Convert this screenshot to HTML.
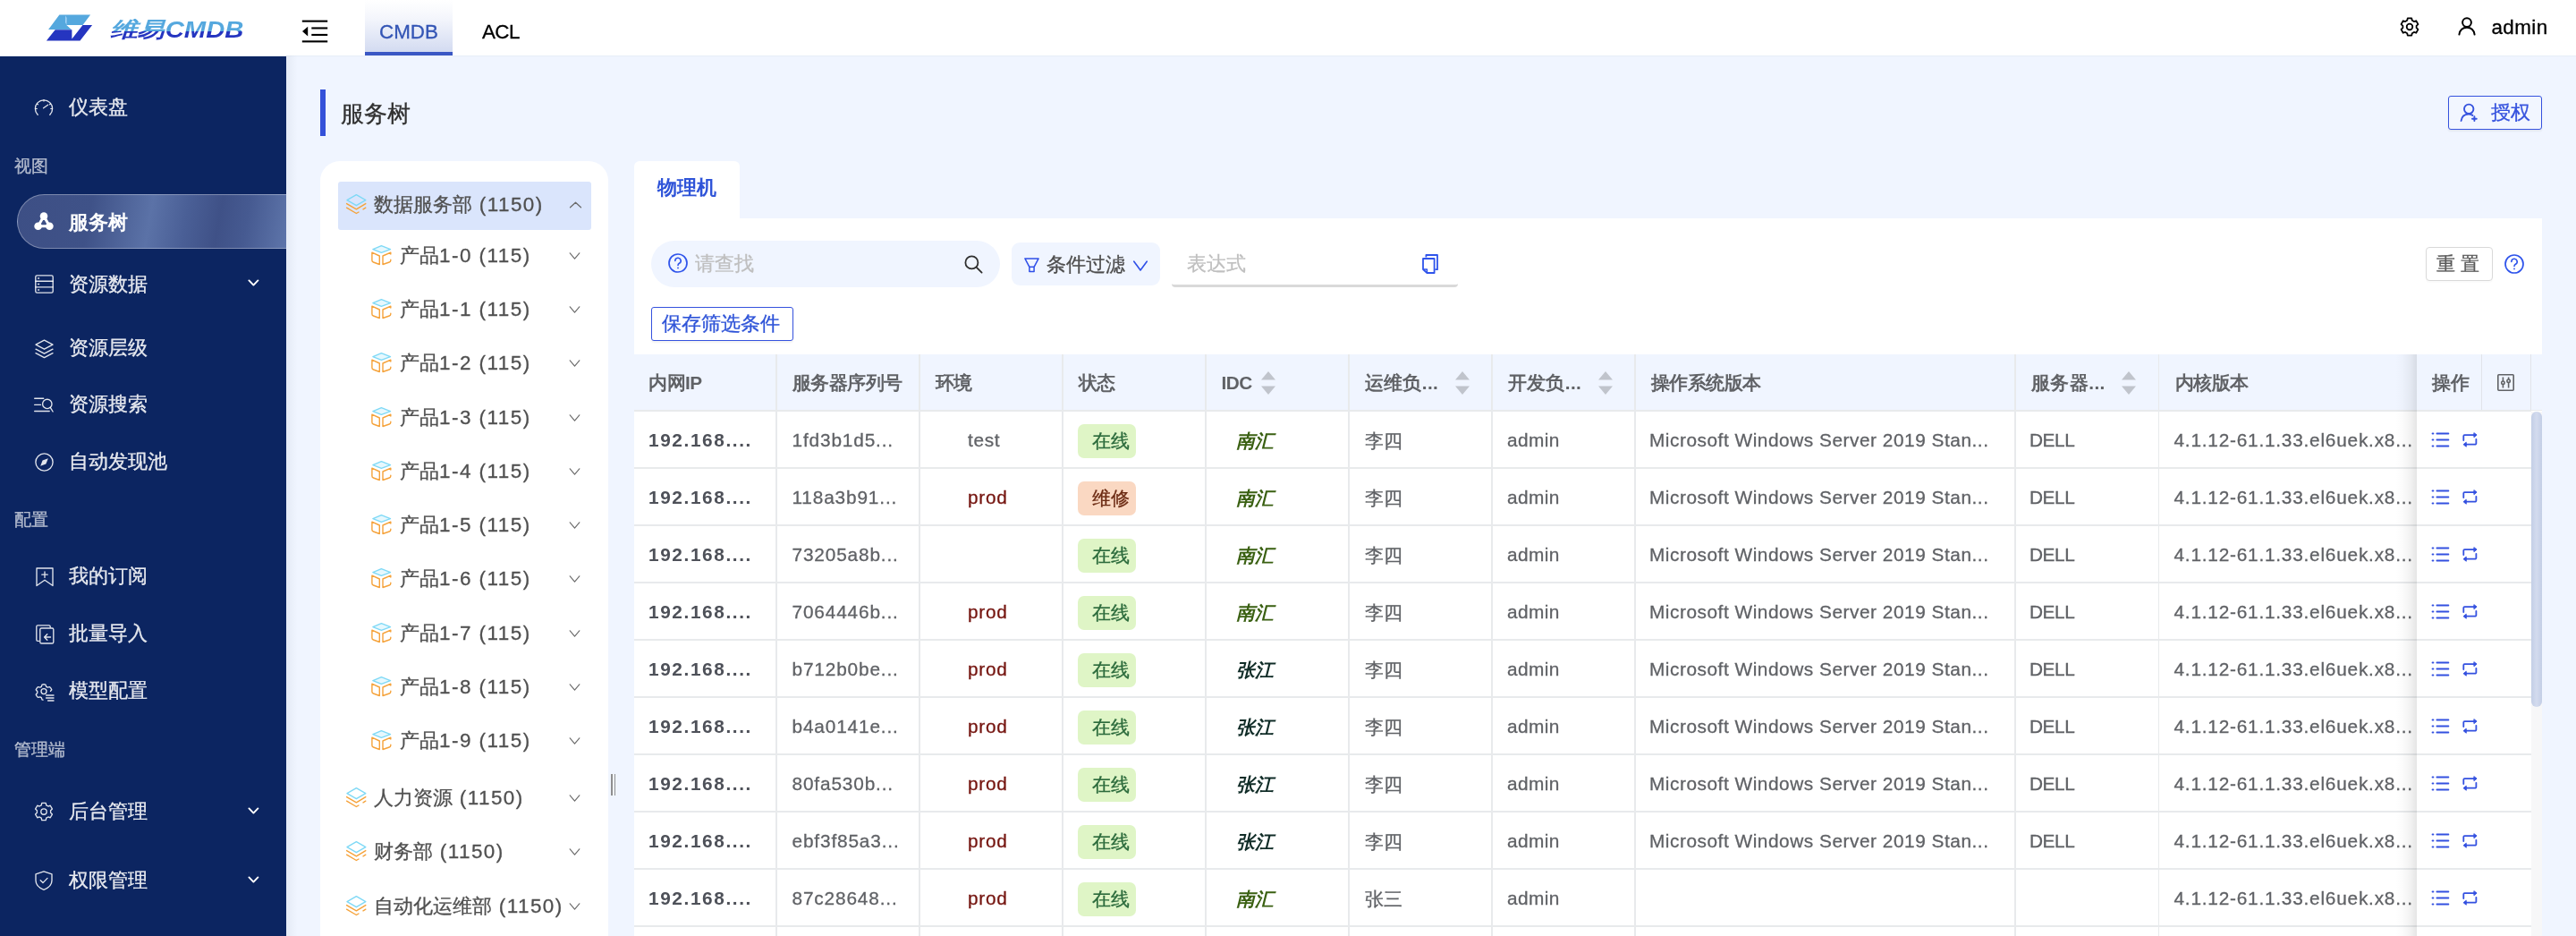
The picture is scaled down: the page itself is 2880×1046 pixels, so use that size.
<!DOCTYPE html>
<html lang="zh"><head><meta charset="utf-8"><title>CMDB</title>
<style>
*{box-sizing:border-box;margin:0;padding:0}
html,body{width:2880px;height:1046px;overflow:hidden}
body{position:relative;background:#f0f5ff;font-family:"Liberation Sans",sans-serif;color:#595959;font-size:22.4px}
#w{position:absolute;left:0;top:0;width:2880px;height:1046px;overflow:hidden;will-change:transform;-webkit-text-stroke:.3px}
.abs{position:absolute}
.t{position:absolute;white-space:nowrap;line-height:1}
svg{position:absolute;overflow:visible}
#hdr{position:absolute;left:0;top:0;width:2880px;height:62px;background:#fff;box-shadow:0 1px 1px rgba(0,21,41,.03)}
#side{position:absolute;left:0;top:63px;width:320px;height:983px;background:#0c2561}
.mi{position:absolute;left:77px;font-size:22.4px;color:rgba(255,255,255,.88);white-space:nowrap;line-height:30px;height:30px}
.gl{position:absolute;left:16px;font-size:19.2px;color:rgba(255,255,255,.62);white-space:nowrap;line-height:26px;height:26px}
.tr{position:absolute;font-size:22.4px;color:#505050;white-space:nowrap;line-height:30px;height:30px}
.tr i{font-style:normal;letter-spacing:1.5px}
.th{position:absolute;letter-spacing:-.5px;font-size:20.8px;font-weight:bold;color:#606266;white-space:nowrap;line-height:28px;height:28px;top:414px}
.td{position:absolute;font-size:20.8px;color:#606266;white-space:nowrap;line-height:28px;height:28px}
.ip{letter-spacing:1.6px}.sn{letter-spacing:.85px}.env{letter-spacing:.7px}.adm{letter-spacing:.4px}.os{letter-spacing:.54px}.dell{letter-spacing:-.4px}.ker{letter-spacing:.78px}
.cj{margin-top:1.5px}
.th,.ip,.idc,#logot,#logot2,#tab,.b{-webkit-text-stroke:0}
.vl{position:absolute;width:1.6px;background:#e8eaec}
.hl{position:absolute;height:1.6px;background:#e8eaec;left:709px;width:2121px}
.tag{position:absolute;width:65px;height:37.5px;border-radius:7px;font-size:20.8px;line-height:37.5px;padding-left:16px;white-space:nowrap}
</style></head>
<body>
<div id="w">
<div id="hdr"></div>
<svg style="left:0;top:0" width="320" height="62" viewBox="0 0 320 62">
<polygon points="66.4,16.6 101.1,16.6 92.5,28 74.3,28 79.9,33 54.1,33" fill="#55a8de"/>
<polygon points="73.2,17.2 74.6,20 74.5,28 73,25" fill="#a6d4f6"/>
<polygon points="61.7,33.2 80.4,33.2 80.4,43.4 92.5,28 103.1,28 89.5,45.6 51.9,45.6" fill="#2535c0"/>
</svg>
<div class="t" id="logot" style="left:117.8px;top:20.5px;font-size:23.5px;background:linear-gradient(#55a8de 0,#55a8de 58%,#2535c0 58%,#2535c0 100%);-webkit-background-clip:text;background-clip:text;color:transparent;font-weight:bold;font-style:italic;transform-origin:0 0;transform:scaleX(1.31);line-height:24px;height:24px;padding:0 4px">维易</div>
<div class="t" id="logot2" style="left:179.8px;top:20.5px;font-size:25px;background:linear-gradient(#55a8de 0,#55a8de 58%,#2535c0 58%,#2535c0 100%);-webkit-background-clip:text;background-clip:text;color:transparent;font-weight:bold;font-style:italic;transform-origin:0 0;transform:scaleX(1.17);line-height:24px;height:24px;padding:0 4px">CMDB</div>
<svg style="left:337px;top:22px" width="30" height="26" viewBox="0 0 30 26">
<rect x=".8" y=".6" width="28.4" height="2.1" fill="#000"/>
<rect x="11.3" y="8.4" width="17.9" height="2.1" fill="#000"/>
<rect x="11.3" y="15.9" width="17.9" height="2.1" fill="#000"/>
<rect x=".8" y="23.3" width="28.4" height="2.1" fill="#000"/>
<polygon points="1,13.1 7.2,7.8 7.2,18.4" fill="#000"/>
</svg>
<div class="abs" style="left:408px;top:0;width:98px;height:62px;background:linear-gradient(#ffffff 0%,#f4f6fc 35%,#d3dbf1 100%);border-bottom:4px solid #3a57c4"></div>
<div class="t" id="cmdb" style="left:424px;top:25px;font-size:22.4px;color:#3355b5;line-height:22px">CMDB</div>
<div class="t" id="acl" style="left:539px;top:25px;font-size:22.4px;color:#000;line-height:22px;letter-spacing:-.6px">ACL</div>
<svg style="left:2683.2px;top:19px" width="22" height="22" viewBox="0 0 22 22" fill="none" stroke="#000" stroke-width="1.8" stroke-linejoin="round">
<path d="M13.76 3.81L13.23 1.35L8.77 1.35L8.24 3.81L6.15 5.02L3.76 4.25L1.53 8.11L3.39 9.8L3.39 12.2L1.53 13.89L3.76 17.75L6.15 16.98L8.24 18.19L8.77 20.65L13.23 20.65L13.76 18.19L15.85 16.98L18.24 17.75L20.47 13.89L18.61 12.2L18.61 9.8L20.47 8.11L18.24 4.25L15.85 5.02z"/>
<circle cx="11" cy="11" r="3.3"/>
</svg>
<svg style="left:2748px;top:19px" width="20" height="21" viewBox="0 0 20 21" fill="none" stroke="#000" stroke-width="2" stroke-linecap="round">
<circle cx="10" cy="6.1" r="4.9"/>
<path d="M1.4 19.6c.8-4.8 4.2-7.8 8.6-7.8s7.8 3 8.6 7.8"/>
</svg>
<div class="t" id="admin" style="left:2785.5px;top:19px;font-size:22.4px;color:#000;line-height:24px;letter-spacing:.4px">admin</div>
<div class="abs" style="left:320px;top:62px;width:12px;height:984px;background:linear-gradient(90deg,rgba(30,40,60,.05),rgba(30,40,60,0))"></div>
<div id="side"></div>
<div class="abs" style="left:19px;top:217px;width:300.5px;height:61px;border-radius:30.5px 0 0 30.5px;border:1.6px solid rgba(255,255,255,.32);border-right:none;background:linear-gradient(100deg,#3d4f85 0%,#3f5288 27%,#5b72a7 49%,#4a5f96 62%,#3f5187 74%,#465a91 84%,#5e75aa 100%)"></div>
<div class="mi" style="top:105px;">仪表盘</div>
<div class="mi" style="top:233.6px;font-weight:bold;color:#fff;-webkit-text-stroke:0;">服务树</div>
<div class="mi" style="top:302.5px;">资源数据</div>
<svg style="left:277px;top:312px" width="13" height="9" viewBox="0 0 13 9" fill="none" stroke="#fff" stroke-width="1.9" stroke-linecap="round" stroke-linejoin="round"><path d="M1.4 1.4l5 5.2 5-5.2"/></svg>
<div class="mi" style="top:374px;">资源层级</div>
<div class="mi" style="top:437px;">资源搜索</div>
<div class="mi" style="top:501px;">自动发现池</div>
<div class="mi" style="top:629px;">我的订阅</div>
<div class="mi" style="top:693px;">批量导入</div>
<div class="mi" style="top:757px;">模型配置</div>
<div class="mi" style="top:892px;">后台管理</div>
<svg style="left:277px;top:901.5px" width="13" height="9" viewBox="0 0 13 9" fill="none" stroke="#fff" stroke-width="1.9" stroke-linecap="round" stroke-linejoin="round"><path d="M1.4 1.4l5 5.2 5-5.2"/></svg>
<div class="mi" style="top:969px;">权限管理</div>
<svg style="left:277px;top:978.5px" width="13" height="9" viewBox="0 0 13 9" fill="none" stroke="#fff" stroke-width="1.9" stroke-linecap="round" stroke-linejoin="round"><path d="M1.4 1.4l5 5.2 5-5.2"/></svg>
<div class="gl" style="top:172.6px">视图</div>
<div class="gl" style="top:568px">配置</div>
<div class="gl" style="top:824.5px">管理端</div>
<svg style="left:38px;top:109px" width="22" height="22" viewBox="0 0 22 22" fill="none" stroke="rgba(255,255,255,.88)" stroke-width="1.35" stroke-linecap="round" stroke-linejoin="round" ><path d="M4.2 19.2A9.6 9.6 0 1 1 17.8 19.2"/><path d="M10.6 11.8l5-3.6"/><path d="M11 2.5v1.6M3.2 7l1.3.8M18.8 7l-1.3.8M1.8 12.5h1.5M20.2 12.5h-1.5" stroke-width="1.2"/></svg>
<svg style="left:38px;top:237px" width="22" height="21" viewBox="0 0 22 21" fill="#fff" stroke="#fff">
<circle cx="11" cy="4.6" r="4.3" stroke="none"/><circle cx="4.6" cy="15.8" r="4.3" stroke="none"/><circle cx="17.4" cy="15.8" r="4.3" stroke="none"/>
<path d="M11 4.6L4.6 15.8h12.8z" fill="none" stroke-width="3"/></svg>
<svg style="left:38.5px;top:307px" width="21" height="21" viewBox="0 0 21 21" fill="none" stroke="rgba(255,255,255,.88)" stroke-width="1.35" stroke-linecap="round" stroke-linejoin="round" ><rect x="0.8" y="0.8" width="19.4" height="19.4" rx="1.6"/><path d="M0.8 7.2h19.4M0.8 13.8h19.4"/><path d="M3.6 4h1M3.6 10.5h1M3.6 17h1" stroke-width="1.3"/></svg>
<svg style="left:38.5px;top:379px" width="21" height="22" viewBox="0 0 21 22" fill="none" stroke="rgba(255,255,255,.88)" stroke-width="1.35" stroke-linecap="round" stroke-linejoin="round" ><path d="M10.5 1.2l9.5 5-9.5 5-9.5-5z"/><path d="M1 11.2l9.5 5 9.5-5"/><path d="M1 15.6l9.5 5 9.5-5"/></svg>
<svg style="left:38px;top:443.5px" width="22" height="20" viewBox="0 0 22 20" fill="none" stroke="rgba(255,255,255,.88)" stroke-width="1.35" stroke-linecap="round" stroke-linejoin="round" ><path d="M.7 1.2h10M.7 8.4h6.8M.7 15.5h16.5"/><circle cx="14.8" cy="7.4" r="5.2"/><path d="M18.3 11.4l2.8 4.6"/></svg>
<svg style="left:38.5px;top:505.5px" width="21" height="21" viewBox="0 0 21 21" fill="none" stroke="rgba(255,255,255,.88)" stroke-width="1.35" stroke-linecap="round" stroke-linejoin="round" ><circle cx="10.5" cy="10.5" r="9.6"/><path d="M14.8 6.2l-2.4 6.2-6.2 2.4 2.4-6.2z" fill="rgba(255,255,255,.88)" stroke="none"/></svg>
<svg style="left:40px;top:633.5px" width="20" height="22" viewBox="0 0 20 22" fill="none" stroke="rgba(255,255,255,.88)" stroke-width="1.35" stroke-linecap="round" stroke-linejoin="round" ><path d="M1 1h18v19.5l-9-6.2-9 6.2z"/><path d="M10 5v6.4M6.8 8.2h6.4" stroke-width="1.3"/></svg>
<svg style="left:40px;top:697.5px" width="21" height="22" viewBox="0 0 21 22" fill="none" stroke="rgba(255,255,255,.88)" stroke-width="1.35" stroke-linecap="round" stroke-linejoin="round" ><path d="M3.4 18.4h-1.2a1.4 1.4 0 0 1-1.4-1.4V2.2A1.4 1.4 0 0 1 2.2 .8h12.6a1.4 1.4 0 0 1 1.4 1.4v.8"/><rect x="4.8" y="4" width="15" height="17" rx="1.6"/><path d="M16.5 14h-6.5M12.8 10.8L9.6 14l3.2 3.2" stroke-width="1.4"/></svg>
<svg style="left:39px;top:761.5px" width="22" height="22" viewBox="0 0 22 22" fill="none" stroke="rgba(255,255,255,.88)" stroke-width="1.35" stroke-linecap="round" stroke-linejoin="round" ><path d="M9 20.2l-.9-.3-.8-2.2-1.5-.8-2.4.5-1.3-1.5-.9-1.7 1.6-1.9v-1.6L1.2 8.8l.9-1.7 1.3-1.5 2.4.5 1.5-.8.8-2.2 1.9-.5 1.9.5.8 2.2 1.5.8 2.4-.5 1.3 1.5.9 1.7-1.3 1.6"/><circle cx="10" cy="10.6" r="3"/><path d="M12.6 15h8.4M12.6 18h8.4M14.6 21h6.4" stroke-width="1.4"/></svg>
<svg style="left:38px;top:896px" width="22" height="22" viewBox="0 0 22 22" fill="none" stroke="rgba(255,255,255,.88)" stroke-width="1.35" stroke-linecap="round" stroke-linejoin="round" ><path d="M13.76 3.81L13.23 1.35L8.77 1.35L8.24 3.81L6.15 5.02L3.76 4.25L1.53 8.11L3.39 9.8L3.39 12.2L1.53 13.89L3.76 17.75L6.15 16.98L8.24 18.19L8.77 20.65L13.23 20.65L13.76 18.19L15.85 16.98L18.24 17.75L20.47 13.89L18.61 12.2L18.61 9.8L20.47 8.11L18.24 4.25L15.85 5.02z"/><circle cx="11" cy="11" r="3.2"/></svg>
<svg style="left:39px;top:973px" width="20" height="22" viewBox="0 0 20 22" fill="none" stroke="rgba(255,255,255,.88)" stroke-width="1.35" stroke-linecap="round" stroke-linejoin="round" ><path d="M10 .9l9 3v7.2c0 4.8-3.6 8.2-9 10.2C4.6 19.3 1 15.9 1 11.1V3.9z"/><path d="M6.2 10.8l2.8 2.8 5-5.2"/></svg>
<div class="abs" style="left:358px;top:100px;width:6px;height:52px;background:#3451d9"></div>
<div class="t" id="ptitle" style="left:381px;top:111px;font-size:25.6px;color:#303030;line-height:32px">服务树</div>
<div class="abs" style="left:2737px;top:107px;width:105px;height:38px;border:1.6px solid #3552de;border-radius:3px;background:#f2f6ff;box-shadow:0 2px 2px rgba(0,0,0,.06)"></div>
<svg style="left:2750px;top:115px" width="22" height="22" viewBox="0 0 22 22" fill="none" stroke="#3552de" stroke-width="1.9" stroke-linecap="round">
<circle cx="10.2" cy="6.8" r="5.2"/><path d="M1.6 20c.6-4.6 3.8-7.4 8.2-7.4 1.8 0 3.4.5 4.6 1.3"/><path d="M16.4 15.3v4.8M14 17.7h4.8" stroke-width="1.9"/></svg>
<div class="t" id="grant" style="left:2785px;top:111px;font-size:22.4px;color:#3552de;line-height:30px">授权</div>
<div class="abs" style="left:358px;top:180px;width:322px;height:900px;background:#fff;border-radius:22px"></div>
<div class="abs" style="left:378px;top:203px;width:283px;height:53.75px;background:#dae5fc;border-radius:3px"></div>
<svg style="left:387px;top:217px" width="22" height="22" viewBox="0 0 22 22" fill="none" stroke="#f5a23a" stroke-width="1.4" stroke-linecap="round" stroke-linejoin="round" ><path d="M1 6.6L11.4 .6l10.4 6L11.4 12.7z" stroke="#7fd9f6"/><path d="M.6 10.6l10.8 6.3 10.4-6.3" stroke="#f5a23a"/><path d="M.6 15.2l10.8 6.3 2.6-1.5M19 16.8l2.8-1.6" stroke="#f5a23a"/></svg>
<div class="tr" id="tr0" style="left:418px;top:214px">数据服务部<i> (1150)</i></div>
<svg style="left:636.7px;top:225.2px" width="13" height="8" viewBox="0 0 13 8" fill="none" stroke="#6b6b6b" stroke-width="1.25" stroke-linecap="round" stroke-linejoin="round"><path d="M.5 6.8l6-5.6 6 5.6"/></svg>
<svg style="left:415.3px;top:273.9px" width="22" height="22" viewBox="0 0 22 22" fill="none" stroke="#f5a23a" stroke-width="1.4" stroke-linecap="round" stroke-linejoin="round" ><path d="M1.9 4.6L11.4 .6l10.1 4-10.1 3.8z" stroke="#7fd9f6" fill="#e6f8fe"/><path d="M.9 8.1L9.3 12v9.5l-6.9-2.5a2 2 0 0 1-1.5-1.9z" stroke="#f5a23a"/><path d="M21.8 10V8.1L13 12v9.5l7.3-2.5a2 2 0 0 0 1.5-1.9v-.9" stroke="#f5a23a"/></svg>
<div class="tr" id="tr1" style="left:447px;top:270.5px">产品<i>1-0 (115)</i></div>
<svg style="left:636.3px;top:281.7px" width="13" height="8" viewBox="0 0 13 8" fill="none" stroke="#6b6b6b" stroke-width="1.15" stroke-linecap="round" stroke-linejoin="round"><path d="M1.2 .8l5.3 6.4L11.8 .8"/></svg>
<svg style="left:415.3px;top:334.4px" width="22" height="22" viewBox="0 0 22 22" fill="none" stroke="#f5a23a" stroke-width="1.4" stroke-linecap="round" stroke-linejoin="round" ><path d="M1.9 4.6L11.4 .6l10.1 4-10.1 3.8z" stroke="#7fd9f6" fill="#e6f8fe"/><path d="M.9 8.1L9.3 12v9.5l-6.9-2.5a2 2 0 0 1-1.5-1.9z" stroke="#f5a23a"/><path d="M21.8 10V8.1L13 12v9.5l7.3-2.5a2 2 0 0 0 1.5-1.9v-.9" stroke="#f5a23a"/></svg>
<div class="tr" id="tr2" style="left:447px;top:331px">产品<i>1-1 (115)</i></div>
<svg style="left:636.3px;top:342.2px" width="13" height="8" viewBox="0 0 13 8" fill="none" stroke="#6b6b6b" stroke-width="1.15" stroke-linecap="round" stroke-linejoin="round"><path d="M1.2 .8l5.3 6.4L11.8 .8"/></svg>
<svg style="left:415.3px;top:394.4px" width="22" height="22" viewBox="0 0 22 22" fill="none" stroke="#f5a23a" stroke-width="1.4" stroke-linecap="round" stroke-linejoin="round" ><path d="M1.9 4.6L11.4 .6l10.1 4-10.1 3.8z" stroke="#7fd9f6" fill="#e6f8fe"/><path d="M.9 8.1L9.3 12v9.5l-6.9-2.5a2 2 0 0 1-1.5-1.9z" stroke="#f5a23a"/><path d="M21.8 10V8.1L13 12v9.5l7.3-2.5a2 2 0 0 0 1.5-1.9v-.9" stroke="#f5a23a"/></svg>
<div class="tr" id="tr3" style="left:447px;top:391px">产品<i>1-2 (115)</i></div>
<svg style="left:636.3px;top:402.2px" width="13" height="8" viewBox="0 0 13 8" fill="none" stroke="#6b6b6b" stroke-width="1.15" stroke-linecap="round" stroke-linejoin="round"><path d="M1.2 .8l5.3 6.4L11.8 .8"/></svg>
<svg style="left:415.3px;top:454.9px" width="22" height="22" viewBox="0 0 22 22" fill="none" stroke="#f5a23a" stroke-width="1.4" stroke-linecap="round" stroke-linejoin="round" ><path d="M1.9 4.6L11.4 .6l10.1 4-10.1 3.8z" stroke="#7fd9f6" fill="#e6f8fe"/><path d="M.9 8.1L9.3 12v9.5l-6.9-2.5a2 2 0 0 1-1.5-1.9z" stroke="#f5a23a"/><path d="M21.8 10V8.1L13 12v9.5l7.3-2.5a2 2 0 0 0 1.5-1.9v-.9" stroke="#f5a23a"/></svg>
<div class="tr" id="tr4" style="left:447px;top:451.5px">产品<i>1-3 (115)</i></div>
<svg style="left:636.3px;top:462.7px" width="13" height="8" viewBox="0 0 13 8" fill="none" stroke="#6b6b6b" stroke-width="1.15" stroke-linecap="round" stroke-linejoin="round"><path d="M1.2 .8l5.3 6.4L11.8 .8"/></svg>
<svg style="left:415.3px;top:514.9px" width="22" height="22" viewBox="0 0 22 22" fill="none" stroke="#f5a23a" stroke-width="1.4" stroke-linecap="round" stroke-linejoin="round" ><path d="M1.9 4.6L11.4 .6l10.1 4-10.1 3.8z" stroke="#7fd9f6" fill="#e6f8fe"/><path d="M.9 8.1L9.3 12v9.5l-6.9-2.5a2 2 0 0 1-1.5-1.9z" stroke="#f5a23a"/><path d="M21.8 10V8.1L13 12v9.5l7.3-2.5a2 2 0 0 0 1.5-1.9v-.9" stroke="#f5a23a"/></svg>
<div class="tr" id="tr5" style="left:447px;top:511.5px">产品<i>1-4 (115)</i></div>
<svg style="left:636.3px;top:522.7px" width="13" height="8" viewBox="0 0 13 8" fill="none" stroke="#6b6b6b" stroke-width="1.15" stroke-linecap="round" stroke-linejoin="round"><path d="M1.2 .8l5.3 6.4L11.8 .8"/></svg>
<svg style="left:415.3px;top:575.4px" width="22" height="22" viewBox="0 0 22 22" fill="none" stroke="#f5a23a" stroke-width="1.4" stroke-linecap="round" stroke-linejoin="round" ><path d="M1.9 4.6L11.4 .6l10.1 4-10.1 3.8z" stroke="#7fd9f6" fill="#e6f8fe"/><path d="M.9 8.1L9.3 12v9.5l-6.9-2.5a2 2 0 0 1-1.5-1.9z" stroke="#f5a23a"/><path d="M21.8 10V8.1L13 12v9.5l7.3-2.5a2 2 0 0 0 1.5-1.9v-.9" stroke="#f5a23a"/></svg>
<div class="tr" id="tr6" style="left:447px;top:572px">产品<i>1-5 (115)</i></div>
<svg style="left:636.3px;top:583.2px" width="13" height="8" viewBox="0 0 13 8" fill="none" stroke="#6b6b6b" stroke-width="1.15" stroke-linecap="round" stroke-linejoin="round"><path d="M1.2 .8l5.3 6.4L11.8 .8"/></svg>
<svg style="left:415.3px;top:635.4px" width="22" height="22" viewBox="0 0 22 22" fill="none" stroke="#f5a23a" stroke-width="1.4" stroke-linecap="round" stroke-linejoin="round" ><path d="M1.9 4.6L11.4 .6l10.1 4-10.1 3.8z" stroke="#7fd9f6" fill="#e6f8fe"/><path d="M.9 8.1L9.3 12v9.5l-6.9-2.5a2 2 0 0 1-1.5-1.9z" stroke="#f5a23a"/><path d="M21.8 10V8.1L13 12v9.5l7.3-2.5a2 2 0 0 0 1.5-1.9v-.9" stroke="#f5a23a"/></svg>
<div class="tr" id="tr7" style="left:447px;top:632px">产品<i>1-6 (115)</i></div>
<svg style="left:636.3px;top:643.2px" width="13" height="8" viewBox="0 0 13 8" fill="none" stroke="#6b6b6b" stroke-width="1.15" stroke-linecap="round" stroke-linejoin="round"><path d="M1.2 .8l5.3 6.4L11.8 .8"/></svg>
<svg style="left:415.3px;top:695.9px" width="22" height="22" viewBox="0 0 22 22" fill="none" stroke="#f5a23a" stroke-width="1.4" stroke-linecap="round" stroke-linejoin="round" ><path d="M1.9 4.6L11.4 .6l10.1 4-10.1 3.8z" stroke="#7fd9f6" fill="#e6f8fe"/><path d="M.9 8.1L9.3 12v9.5l-6.9-2.5a2 2 0 0 1-1.5-1.9z" stroke="#f5a23a"/><path d="M21.8 10V8.1L13 12v9.5l7.3-2.5a2 2 0 0 0 1.5-1.9v-.9" stroke="#f5a23a"/></svg>
<div class="tr" id="tr8" style="left:447px;top:692.5px">产品<i>1-7 (115)</i></div>
<svg style="left:636.3px;top:703.7px" width="13" height="8" viewBox="0 0 13 8" fill="none" stroke="#6b6b6b" stroke-width="1.15" stroke-linecap="round" stroke-linejoin="round"><path d="M1.2 .8l5.3 6.4L11.8 .8"/></svg>
<svg style="left:415.3px;top:755.9px" width="22" height="22" viewBox="0 0 22 22" fill="none" stroke="#f5a23a" stroke-width="1.4" stroke-linecap="round" stroke-linejoin="round" ><path d="M1.9 4.6L11.4 .6l10.1 4-10.1 3.8z" stroke="#7fd9f6" fill="#e6f8fe"/><path d="M.9 8.1L9.3 12v9.5l-6.9-2.5a2 2 0 0 1-1.5-1.9z" stroke="#f5a23a"/><path d="M21.8 10V8.1L13 12v9.5l7.3-2.5a2 2 0 0 0 1.5-1.9v-.9" stroke="#f5a23a"/></svg>
<div class="tr" id="tr9" style="left:447px;top:752.5px">产品<i>1-8 (115)</i></div>
<svg style="left:636.3px;top:763.7px" width="13" height="8" viewBox="0 0 13 8" fill="none" stroke="#6b6b6b" stroke-width="1.15" stroke-linecap="round" stroke-linejoin="round"><path d="M1.2 .8l5.3 6.4L11.8 .8"/></svg>
<svg style="left:415.3px;top:816.4px" width="22" height="22" viewBox="0 0 22 22" fill="none" stroke="#f5a23a" stroke-width="1.4" stroke-linecap="round" stroke-linejoin="round" ><path d="M1.9 4.6L11.4 .6l10.1 4-10.1 3.8z" stroke="#7fd9f6" fill="#e6f8fe"/><path d="M.9 8.1L9.3 12v9.5l-6.9-2.5a2 2 0 0 1-1.5-1.9z" stroke="#f5a23a"/><path d="M21.8 10V8.1L13 12v9.5l7.3-2.5a2 2 0 0 0 1.5-1.9v-.9" stroke="#f5a23a"/></svg>
<div class="tr" id="tr10" style="left:447px;top:813px">产品<i>1-9 (115)</i></div>
<svg style="left:636.3px;top:824.2px" width="13" height="8" viewBox="0 0 13 8" fill="none" stroke="#6b6b6b" stroke-width="1.15" stroke-linecap="round" stroke-linejoin="round"><path d="M1.2 .8l5.3 6.4L11.8 .8"/></svg>
<svg style="left:387px;top:880px" width="22" height="22" viewBox="0 0 22 22" fill="none" stroke="#f5a23a" stroke-width="1.4" stroke-linecap="round" stroke-linejoin="round" ><path d="M1 6.6L11.4 .6l10.4 6L11.4 12.7z" stroke="#7fd9f6"/><path d="M.6 10.6l10.8 6.3 10.4-6.3" stroke="#f5a23a"/><path d="M.6 15.2l10.8 6.3 2.6-1.5M19 16.8l2.8-1.6" stroke="#f5a23a"/></svg>
<div class="tr" id="tr11" style="left:418px;top:877px">人力资源<i> (1150)</i></div>
<svg style="left:636.3px;top:888.2px" width="13" height="8" viewBox="0 0 13 8" fill="none" stroke="#6b6b6b" stroke-width="1.15" stroke-linecap="round" stroke-linejoin="round"><path d="M1.2 .8l5.3 6.4L11.8 .8"/></svg>
<svg style="left:387px;top:940px" width="22" height="22" viewBox="0 0 22 22" fill="none" stroke="#f5a23a" stroke-width="1.4" stroke-linecap="round" stroke-linejoin="round" ><path d="M1 6.6L11.4 .6l10.4 6L11.4 12.7z" stroke="#7fd9f6"/><path d="M.6 10.6l10.8 6.3 10.4-6.3" stroke="#f5a23a"/><path d="M.6 15.2l10.8 6.3 2.6-1.5M19 16.8l2.8-1.6" stroke="#f5a23a"/></svg>
<div class="tr" id="tr12" style="left:418px;top:937px">财务部<i> (1150)</i></div>
<svg style="left:636.3px;top:948.2px" width="13" height="8" viewBox="0 0 13 8" fill="none" stroke="#6b6b6b" stroke-width="1.15" stroke-linecap="round" stroke-linejoin="round"><path d="M1.2 .8l5.3 6.4L11.8 .8"/></svg>
<svg style="left:387px;top:1000.5px" width="22" height="22" viewBox="0 0 22 22" fill="none" stroke="#f5a23a" stroke-width="1.4" stroke-linecap="round" stroke-linejoin="round" ><path d="M1 6.6L11.4 .6l10.4 6L11.4 12.7z" stroke="#7fd9f6"/><path d="M.6 10.6l10.8 6.3 10.4-6.3" stroke="#f5a23a"/><path d="M.6 15.2l10.8 6.3 2.6-1.5M19 16.8l2.8-1.6" stroke="#f5a23a"/></svg>
<div class="tr" id="tr13" style="left:418px;top:997.5px">自动化运维部<i> (1150)</i></div>
<svg style="left:636.3px;top:1008.7px" width="13" height="8" viewBox="0 0 13 8" fill="none" stroke="#6b6b6b" stroke-width="1.15" stroke-linecap="round" stroke-linejoin="round"><path d="M1.2 .8l5.3 6.4L11.8 .8"/></svg>
<div class="abs" style="left:683.2px;top:865px;width:1.5px;height:24px;background:#8f8f8f"></div>
<div class="abs" style="left:686.5px;top:865px;width:1.5px;height:24px;background:#8f8f8f"></div>
<div class="abs" style="left:709px;top:180px;width:118px;height:70px;background:#fff;border-radius:6px 6px 0 0"></div>
<div class="abs" style="left:709px;top:243.75px;width:2133px;height:810px;background:#fff"></div>
<div class="t" id="tab" style="left:735px;top:195px;font-size:22.4px;font-weight:bold;color:#2f54d8;line-height:30px">物理机</div>
<div class="abs" style="left:728px;top:269px;width:390px;height:52px;border-radius:26px;background:#f0f5ff"></div>
<svg style="left:747.2px;top:283.4px" width="22" height="22" viewBox="0 0 22 22" fill="none" stroke="#2f54eb" stroke-width="1.7" stroke-linecap="round"><circle cx="11" cy="11" r="10"/><path d="M7.8 8.4a3.2 3.2 0 1 1 4.6 2.9c-.9.5-1.4 1-1.4 2.1" stroke-width="1.6"/><circle cx="11" cy="16.4" r=".9" fill="#2f54eb" stroke="none"/></svg>
<div class="t" id="ph1" style="left:777px;top:280px;font-size:22.4px;color:#bfbfbf;line-height:30px">请查找</div>
<svg style="left:1078px;top:285px" width="21" height="21" viewBox="0 0 21 21" fill="none" stroke="#303030" stroke-width="1.8" stroke-linecap="round"><circle cx="8.4" cy="8.4" r="7"/><path d="M13.6 13.6l6 6"/></svg>
<div class="abs" style="left:1131px;top:271px;width:166px;height:48px;border-radius:9px;background:#f0f5ff"></div>
<svg style="left:1145px;top:288.4px" width="17" height="17" viewBox="0 0 17 17" fill="none" stroke="#2f4fe8" stroke-width="1.5" stroke-linejoin="round"><path d="M.9 .9h15.2l-5 9.4v5.3H5.9V10.3z"/><path d="M5.9 10.3h5.2"/></svg>
<div class="t" id="flt" style="left:1169.5px;top:281px;font-size:22.4px;color:#4d4d4d;line-height:30px">条件过滤</div>
<svg style="left:1267px;top:290.5px" width="16" height="12" viewBox="0 0 16 12" fill="none" stroke="#2f4fe8" stroke-width="1.6" stroke-linecap="round" stroke-linejoin="round"><path d="M.8 1.2l7.2 9.8 7.2-9.8"/></svg>
<div class="abs" style="left:1310px;top:271px;width:320px;height:50px;border-bottom:3.2px solid #d9d9d9;border-radius:0 0 4px 4px"></div>
<div class="t" id="ph2" style="left:1327px;top:279.5px;font-size:22.4px;color:#bfbfbf;line-height:30px">表达式</div>
<svg style="left:1590px;top:284px" width="18" height="22" viewBox="0 0 18 22" fill="none" stroke="#2f54eb" stroke-width="1.8" stroke-linejoin="round"><path d="M4.4 3.4V1h12.6v16.2h-2.6"/><path d="M1 5h12.6v16H5.4L1 17z" fill="#fff"/><path d="M1 17h4.4v4" stroke-width="1.5"/></svg>
<div class="abs" style="left:2712px;top:276px;width:75px;height:37.5px;border:1.6px solid #d9d9d9;border-radius:4px;background:#fff;box-shadow:0 2px 0 rgba(0,0,0,.015)"></div>
<div class="t" id="reset" style="left:2724px;top:281px;font-size:20.8px;color:#595959;line-height:28px;word-spacing:0">重&nbsp;置</div>
<svg style="left:2800px;top:283.8px" width="22" height="22" viewBox="0 0 22 22" fill="none" stroke="#2f54eb" stroke-width="1.7" stroke-linecap="round"><circle cx="11" cy="11" r="10"/><path d="M7.8 8.4a3.2 3.2 0 1 1 4.6 2.9c-.9.5-1.4 1-1.4 2.1" stroke-width="1.6"/><circle cx="11" cy="16.4" r=".9" fill="#2f54eb" stroke="none"/></svg>
<div class="abs" style="left:728px;top:343px;width:159px;height:38px;border:1.6px solid #3552de;border-radius:3px;background:#fff;box-shadow:0 2px 2px rgba(0,0,0,.05)"></div>
<div class="t" id="save" style="left:740px;top:347px;font-size:22.4px;color:#2f54d8;line-height:30px">保存筛选条件</div>
<div class="abs" style="left:709px;top:395.75px;width:2133px;height:63px;background:#f0f5ff"></div>
<div class="vl" style="left:867px;top:395.75px;height:660px"></div>
<div class="vl" style="left:1027px;top:395.75px;height:660px"></div>
<div class="vl" style="left:1187px;top:395.75px;height:660px"></div>
<div class="vl" style="left:1347px;top:395.75px;height:660px"></div>
<div class="vl" style="left:1507px;top:395.75px;height:660px"></div>
<div class="vl" style="left:1667px;top:395.75px;height:660px"></div>
<div class="vl" style="left:1827px;top:395.75px;height:660px"></div>
<div class="vl" style="left:2252px;top:395.75px;height:660px"></div>
<div class="vl" style="left:2412.5px;top:395.75px;height:660px"></div>
<div class="hl" style="top:458.09999999999997px"></div>
<div class="hl" style="top:522.1px"></div>
<div class="hl" style="top:586.1px"></div>
<div class="hl" style="top:650.1px"></div>
<div class="hl" style="top:714.1px"></div>
<div class="hl" style="top:778.1px"></div>
<div class="hl" style="top:842.1px"></div>
<div class="hl" style="top:906.1px"></div>
<div class="hl" style="top:970.1px"></div>
<div class="hl" style="top:1034.1000000000001px"></div>
<div class="th" id="th0" style="left:725px">内网IP</div>
<div class="th" id="th1" style="left:885.5px">服务器序列号</div>
<div class="th" id="th2" style="left:1045.5px">环境</div>
<div class="th" id="th3" style="left:1205.5px">状态</div>
<div class="th" id="th4" style="left:1365.5px">IDC</div>
<div class="th" id="th5" style="left:1525.5px;letter-spacing:.4px">运维负...</div>
<div class="th" id="th6" style="left:1685.5px;letter-spacing:.4px">开发负...</div>
<div class="th" id="th7" style="left:1845.5px">操作系统版本</div>
<div class="th" id="th8" style="left:2271px;letter-spacing:.4px">服务器...</div>
<div class="th" id="th9" style="left:2431.5px">内核版本</div>
<svg style="left:1410px;top:415px" width="16" height="26" viewBox="0 0 16 26"><polygon points="8,0 16,9.5 0,9.5" fill="#c0c4cc"/><polygon points="0,16.5 16,16.5 8,26" fill="#c0c4cc"/></svg>
<svg style="left:1627px;top:415px" width="16" height="26" viewBox="0 0 16 26"><polygon points="8,0 16,9.5 0,9.5" fill="#c0c4cc"/><polygon points="0,16.5 16,16.5 8,26" fill="#c0c4cc"/></svg>
<svg style="left:1786.5px;top:415px" width="16" height="26" viewBox="0 0 16 26"><polygon points="8,0 16,9.5 0,9.5" fill="#c0c4cc"/><polygon points="0,16.5 16,16.5 8,26" fill="#c0c4cc"/></svg>
<svg style="left:2372px;top:415px" width="16" height="26" viewBox="0 0 16 26"><polygon points="8,0 16,9.5 0,9.5" fill="#c0c4cc"/><polygon points="0,16.5 16,16.5 8,26" fill="#c0c4cc"/></svg>
<div class="td ip" id="ip0" style="left:725px;top:477.5px;font-weight:bold;color:#4e5159">192.168....</div>
<div class="td sn" id="sn0" style="left:885.5px;top:477.5px">1fd3b1d5...</div>
<div class="td env" id="env0" style="left:1082px;top:477.5px;color:#606266">test</div>
<div class="tag" style="left:1205px;top:474px;background:#dff5c6;color:#2c6b3c">在线</div>
<div class="td idc cj" id="idc0" style="left:1381.5px;top:477.5px;font-weight:bold;font-style:italic;color:#3a6012">南汇</div>
<div class="td cj" id="ops0" style="left:1525.5px;top:477.5px">李四</div>
<div class="td adm" id="adm0" style="left:1685px;top:477.5px">admin</div>
<div class="td os" id="os0" style="left:1844px;top:477.5px">Microsoft Windows Server 2019 Stan...</div>
<div class="td dell" id="dell0" style="left:2269px;top:477.5px">DELL</div>
<div class="td ker" id="ker0" style="left:2430.5px;top:477.5px">4.1.12-61.1.33.el6uek.x8...</div>
<div class="td ip" id="ip1" style="left:725px;top:541.5px;font-weight:bold;color:#4e5159">192.168....</div>
<div class="td sn" id="sn1" style="left:885.5px;top:541.5px">118a3b91...</div>
<div class="td env" id="env1" style="left:1082px;top:541.5px;color:#751510">prod</div>
<div class="tag" style="left:1205px;top:538px;background:#fad8c2;color:#6b2a12">维修</div>
<div class="td idc cj" id="idc1" style="left:1381.5px;top:541.5px;font-weight:bold;font-style:italic;color:#3a6012">南汇</div>
<div class="td cj" id="ops1" style="left:1525.5px;top:541.5px">李四</div>
<div class="td adm" id="adm1" style="left:1685px;top:541.5px">admin</div>
<div class="td os" id="os1" style="left:1844px;top:541.5px">Microsoft Windows Server 2019 Stan...</div>
<div class="td dell" id="dell1" style="left:2269px;top:541.5px">DELL</div>
<div class="td ker" id="ker1" style="left:2430.5px;top:541.5px">4.1.12-61.1.33.el6uek.x8...</div>
<div class="td ip" id="ip2" style="left:725px;top:605.5px;font-weight:bold;color:#4e5159">192.168....</div>
<div class="td sn" id="sn2" style="left:885.5px;top:605.5px">73205a8b...</div>
<div class="tag" style="left:1205px;top:602px;background:#dff5c6;color:#2c6b3c">在线</div>
<div class="td idc cj" id="idc2" style="left:1381.5px;top:605.5px;font-weight:bold;font-style:italic;color:#3a6012">南汇</div>
<div class="td cj" id="ops2" style="left:1525.5px;top:605.5px">李四</div>
<div class="td adm" id="adm2" style="left:1685px;top:605.5px">admin</div>
<div class="td os" id="os2" style="left:1844px;top:605.5px">Microsoft Windows Server 2019 Stan...</div>
<div class="td dell" id="dell2" style="left:2269px;top:605.5px">DELL</div>
<div class="td ker" id="ker2" style="left:2430.5px;top:605.5px">4.1.12-61.1.33.el6uek.x8...</div>
<div class="td ip" id="ip3" style="left:725px;top:669.5px;font-weight:bold;color:#4e5159">192.168....</div>
<div class="td sn" id="sn3" style="left:885.5px;top:669.5px">7064446b...</div>
<div class="td env" id="env3" style="left:1082px;top:669.5px;color:#751510">prod</div>
<div class="tag" style="left:1205px;top:666px;background:#dff5c6;color:#2c6b3c">在线</div>
<div class="td idc cj" id="idc3" style="left:1381.5px;top:669.5px;font-weight:bold;font-style:italic;color:#3a6012">南汇</div>
<div class="td cj" id="ops3" style="left:1525.5px;top:669.5px">李四</div>
<div class="td adm" id="adm3" style="left:1685px;top:669.5px">admin</div>
<div class="td os" id="os3" style="left:1844px;top:669.5px">Microsoft Windows Server 2019 Stan...</div>
<div class="td dell" id="dell3" style="left:2269px;top:669.5px">DELL</div>
<div class="td ker" id="ker3" style="left:2430.5px;top:669.5px">4.1.12-61.1.33.el6uek.x8...</div>
<div class="td ip" id="ip4" style="left:725px;top:733.5px;font-weight:bold;color:#4e5159">192.168....</div>
<div class="td sn" id="sn4" style="left:885.5px;top:733.5px">b712b0be...</div>
<div class="td env" id="env4" style="left:1082px;top:733.5px;color:#751510">prod</div>
<div class="tag" style="left:1205px;top:730px;background:#dff5c6;color:#2c6b3c">在线</div>
<div class="td idc cj" id="idc4" style="left:1381.5px;top:733.5px;font-weight:bold;font-style:italic;color:#102c27">张江</div>
<div class="td cj" id="ops4" style="left:1525.5px;top:733.5px">李四</div>
<div class="td adm" id="adm4" style="left:1685px;top:733.5px">admin</div>
<div class="td os" id="os4" style="left:1844px;top:733.5px">Microsoft Windows Server 2019 Stan...</div>
<div class="td dell" id="dell4" style="left:2269px;top:733.5px">DELL</div>
<div class="td ker" id="ker4" style="left:2430.5px;top:733.5px">4.1.12-61.1.33.el6uek.x8...</div>
<div class="td ip" id="ip5" style="left:725px;top:797.5px;font-weight:bold;color:#4e5159">192.168....</div>
<div class="td sn" id="sn5" style="left:885.5px;top:797.5px">b4a0141e...</div>
<div class="td env" id="env5" style="left:1082px;top:797.5px;color:#751510">prod</div>
<div class="tag" style="left:1205px;top:794px;background:#dff5c6;color:#2c6b3c">在线</div>
<div class="td idc cj" id="idc5" style="left:1381.5px;top:797.5px;font-weight:bold;font-style:italic;color:#102c27">张江</div>
<div class="td cj" id="ops5" style="left:1525.5px;top:797.5px">李四</div>
<div class="td adm" id="adm5" style="left:1685px;top:797.5px">admin</div>
<div class="td os" id="os5" style="left:1844px;top:797.5px">Microsoft Windows Server 2019 Stan...</div>
<div class="td dell" id="dell5" style="left:2269px;top:797.5px">DELL</div>
<div class="td ker" id="ker5" style="left:2430.5px;top:797.5px">4.1.12-61.1.33.el6uek.x8...</div>
<div class="td ip" id="ip6" style="left:725px;top:861.5px;font-weight:bold;color:#4e5159">192.168....</div>
<div class="td sn" id="sn6" style="left:885.5px;top:861.5px">80fa530b...</div>
<div class="td env" id="env6" style="left:1082px;top:861.5px;color:#751510">prod</div>
<div class="tag" style="left:1205px;top:858px;background:#dff5c6;color:#2c6b3c">在线</div>
<div class="td idc cj" id="idc6" style="left:1381.5px;top:861.5px;font-weight:bold;font-style:italic;color:#102c27">张江</div>
<div class="td cj" id="ops6" style="left:1525.5px;top:861.5px">李四</div>
<div class="td adm" id="adm6" style="left:1685px;top:861.5px">admin</div>
<div class="td os" id="os6" style="left:1844px;top:861.5px">Microsoft Windows Server 2019 Stan...</div>
<div class="td dell" id="dell6" style="left:2269px;top:861.5px">DELL</div>
<div class="td ker" id="ker6" style="left:2430.5px;top:861.5px">4.1.12-61.1.33.el6uek.x8...</div>
<div class="td ip" id="ip7" style="left:725px;top:925.5px;font-weight:bold;color:#4e5159">192.168....</div>
<div class="td sn" id="sn7" style="left:885.5px;top:925.5px">ebf3f85a3...</div>
<div class="td env" id="env7" style="left:1082px;top:925.5px;color:#751510">prod</div>
<div class="tag" style="left:1205px;top:922px;background:#dff5c6;color:#2c6b3c">在线</div>
<div class="td idc cj" id="idc7" style="left:1381.5px;top:925.5px;font-weight:bold;font-style:italic;color:#102c27">张江</div>
<div class="td cj" id="ops7" style="left:1525.5px;top:925.5px">李四</div>
<div class="td adm" id="adm7" style="left:1685px;top:925.5px">admin</div>
<div class="td os" id="os7" style="left:1844px;top:925.5px">Microsoft Windows Server 2019 Stan...</div>
<div class="td dell" id="dell7" style="left:2269px;top:925.5px">DELL</div>
<div class="td ker" id="ker7" style="left:2430.5px;top:925.5px">4.1.12-61.1.33.el6uek.x8...</div>
<div class="td ip" id="ip8" style="left:725px;top:989.5px;font-weight:bold;color:#4e5159">192.168....</div>
<div class="td sn" id="sn8" style="left:885.5px;top:989.5px">87c28648...</div>
<div class="td env" id="env8" style="left:1082px;top:989.5px;color:#751510">prod</div>
<div class="tag" style="left:1205px;top:986px;background:#dff5c6;color:#2c6b3c">在线</div>
<div class="td idc cj" id="idc8" style="left:1381.5px;top:989.5px;font-weight:bold;font-style:italic;color:#3a6012">南汇</div>
<div class="td cj" id="ops8" style="left:1525.5px;top:989.5px">张三</div>
<div class="td adm" id="adm8" style="left:1685px;top:989.5px">admin</div>
<div class="td ker" id="ker8" style="left:2430.5px;top:989.5px">4.1.12-61.1.33.el6uek.x8...</div>
<div class="abs" style="left:2678px;top:395.75px;width:24px;height:660px;background:linear-gradient(90deg,rgba(0,0,0,0),rgba(0,0,0,.015) 35%,rgba(0,0,0,.05) 70%,rgba(0,0,0,.1))"></div>
<div class="abs" style="left:2701.75px;top:395.75px;width:128px;height:63px;background:#f0f5ff"></div>
<div class="abs" style="left:2701.75px;top:458.75px;width:128px;height:600px;background:#fff"></div>
<div class="vl" style="left:2773.8px;top:395.75px;height:63px;width:1px;background:#e1e4ea"></div>
<div class="vl" style="left:2829.2px;top:395.75px;height:63px;width:1px;background:#e1e4ea"></div>
<div class="hl" style="top:457.7px;left:2701.75px;width:140.25px"></div>
<div class="hl" style="top:458.09999999999997px;left:2701.75px;width:128px"></div>
<div class="hl" style="top:522.1px;left:2701.75px;width:128px"></div>
<div class="hl" style="top:586.1px;left:2701.75px;width:128px"></div>
<div class="hl" style="top:650.1px;left:2701.75px;width:128px"></div>
<div class="hl" style="top:714.1px;left:2701.75px;width:128px"></div>
<div class="hl" style="top:778.1px;left:2701.75px;width:128px"></div>
<div class="hl" style="top:842.1px;left:2701.75px;width:128px"></div>
<div class="hl" style="top:906.1px;left:2701.75px;width:128px"></div>
<div class="hl" style="top:970.1px;left:2701.75px;width:128px"></div>
<div class="hl" style="top:1034.1000000000001px;left:2701.75px;width:128px"></div>
<div class="th" id="thop" style="left:2719px">操作</div>
<svg style="left:2792px;top:418px" width="19" height="19" viewBox="0 0 19 19" fill="none" stroke="#606266" stroke-width="1.6"><rect x=".8" y=".8" width="17.4" height="17.4" rx="1"/><path d="M6.4 3.5v4.5M6.4 11.5v4M12.6 3.5v2.5M12.6 9.5v6"/><circle cx="6.4" cy="9.7" r="1.7"/><circle cx="12.6" cy="7.7" r="1.7"/></svg>
<svg style="left:2718px;top:482.8px" width="21" height="17" viewBox="0 0 21 17" fill="none" stroke="#3350e0" stroke-width="1.8" stroke-linecap="round"><path d="M6.4 1.5h13M6.4 8.5h13M6.4 15.5h13"/><path d="M1.7 1.5h.6M1.7 8.5h.6M1.7 15.5h.6" stroke-width="2.2"/></svg>
<svg style="left:2753px;top:482.8px" width="17" height="17" viewBox="0 0 17 17" fill="none" stroke="#3350e0" stroke-width="1.8" stroke-linejoin="round" stroke-linecap="round"><path d="M1.3 9V4.3a1.2 1.2 0 0 1 1.2-1.2h11"/><path d="M15.4 7.8v4.7a1.2 1.2 0 0 1-1.2 1.2H4"/><path d="M13.2 .9l2.9 2.2-2.9 2.3z" fill="#3350e0" stroke-width="1"/><path d="M4 11.5L1.1 13.7 4 16z" fill="#3350e0" stroke-width="1"/></svg>
<svg style="left:2718px;top:546.8px" width="21" height="17" viewBox="0 0 21 17" fill="none" stroke="#3350e0" stroke-width="1.8" stroke-linecap="round"><path d="M6.4 1.5h13M6.4 8.5h13M6.4 15.5h13"/><path d="M1.7 1.5h.6M1.7 8.5h.6M1.7 15.5h.6" stroke-width="2.2"/></svg>
<svg style="left:2753px;top:546.8px" width="17" height="17" viewBox="0 0 17 17" fill="none" stroke="#3350e0" stroke-width="1.8" stroke-linejoin="round" stroke-linecap="round"><path d="M1.3 9V4.3a1.2 1.2 0 0 1 1.2-1.2h11"/><path d="M15.4 7.8v4.7a1.2 1.2 0 0 1-1.2 1.2H4"/><path d="M13.2 .9l2.9 2.2-2.9 2.3z" fill="#3350e0" stroke-width="1"/><path d="M4 11.5L1.1 13.7 4 16z" fill="#3350e0" stroke-width="1"/></svg>
<svg style="left:2718px;top:610.8px" width="21" height="17" viewBox="0 0 21 17" fill="none" stroke="#3350e0" stroke-width="1.8" stroke-linecap="round"><path d="M6.4 1.5h13M6.4 8.5h13M6.4 15.5h13"/><path d="M1.7 1.5h.6M1.7 8.5h.6M1.7 15.5h.6" stroke-width="2.2"/></svg>
<svg style="left:2753px;top:610.8px" width="17" height="17" viewBox="0 0 17 17" fill="none" stroke="#3350e0" stroke-width="1.8" stroke-linejoin="round" stroke-linecap="round"><path d="M1.3 9V4.3a1.2 1.2 0 0 1 1.2-1.2h11"/><path d="M15.4 7.8v4.7a1.2 1.2 0 0 1-1.2 1.2H4"/><path d="M13.2 .9l2.9 2.2-2.9 2.3z" fill="#3350e0" stroke-width="1"/><path d="M4 11.5L1.1 13.7 4 16z" fill="#3350e0" stroke-width="1"/></svg>
<svg style="left:2718px;top:674.8px" width="21" height="17" viewBox="0 0 21 17" fill="none" stroke="#3350e0" stroke-width="1.8" stroke-linecap="round"><path d="M6.4 1.5h13M6.4 8.5h13M6.4 15.5h13"/><path d="M1.7 1.5h.6M1.7 8.5h.6M1.7 15.5h.6" stroke-width="2.2"/></svg>
<svg style="left:2753px;top:674.8px" width="17" height="17" viewBox="0 0 17 17" fill="none" stroke="#3350e0" stroke-width="1.8" stroke-linejoin="round" stroke-linecap="round"><path d="M1.3 9V4.3a1.2 1.2 0 0 1 1.2-1.2h11"/><path d="M15.4 7.8v4.7a1.2 1.2 0 0 1-1.2 1.2H4"/><path d="M13.2 .9l2.9 2.2-2.9 2.3z" fill="#3350e0" stroke-width="1"/><path d="M4 11.5L1.1 13.7 4 16z" fill="#3350e0" stroke-width="1"/></svg>
<svg style="left:2718px;top:738.8px" width="21" height="17" viewBox="0 0 21 17" fill="none" stroke="#3350e0" stroke-width="1.8" stroke-linecap="round"><path d="M6.4 1.5h13M6.4 8.5h13M6.4 15.5h13"/><path d="M1.7 1.5h.6M1.7 8.5h.6M1.7 15.5h.6" stroke-width="2.2"/></svg>
<svg style="left:2753px;top:738.8px" width="17" height="17" viewBox="0 0 17 17" fill="none" stroke="#3350e0" stroke-width="1.8" stroke-linejoin="round" stroke-linecap="round"><path d="M1.3 9V4.3a1.2 1.2 0 0 1 1.2-1.2h11"/><path d="M15.4 7.8v4.7a1.2 1.2 0 0 1-1.2 1.2H4"/><path d="M13.2 .9l2.9 2.2-2.9 2.3z" fill="#3350e0" stroke-width="1"/><path d="M4 11.5L1.1 13.7 4 16z" fill="#3350e0" stroke-width="1"/></svg>
<svg style="left:2718px;top:802.8px" width="21" height="17" viewBox="0 0 21 17" fill="none" stroke="#3350e0" stroke-width="1.8" stroke-linecap="round"><path d="M6.4 1.5h13M6.4 8.5h13M6.4 15.5h13"/><path d="M1.7 1.5h.6M1.7 8.5h.6M1.7 15.5h.6" stroke-width="2.2"/></svg>
<svg style="left:2753px;top:802.8px" width="17" height="17" viewBox="0 0 17 17" fill="none" stroke="#3350e0" stroke-width="1.8" stroke-linejoin="round" stroke-linecap="round"><path d="M1.3 9V4.3a1.2 1.2 0 0 1 1.2-1.2h11"/><path d="M15.4 7.8v4.7a1.2 1.2 0 0 1-1.2 1.2H4"/><path d="M13.2 .9l2.9 2.2-2.9 2.3z" fill="#3350e0" stroke-width="1"/><path d="M4 11.5L1.1 13.7 4 16z" fill="#3350e0" stroke-width="1"/></svg>
<svg style="left:2718px;top:866.8px" width="21" height="17" viewBox="0 0 21 17" fill="none" stroke="#3350e0" stroke-width="1.8" stroke-linecap="round"><path d="M6.4 1.5h13M6.4 8.5h13M6.4 15.5h13"/><path d="M1.7 1.5h.6M1.7 8.5h.6M1.7 15.5h.6" stroke-width="2.2"/></svg>
<svg style="left:2753px;top:866.8px" width="17" height="17" viewBox="0 0 17 17" fill="none" stroke="#3350e0" stroke-width="1.8" stroke-linejoin="round" stroke-linecap="round"><path d="M1.3 9V4.3a1.2 1.2 0 0 1 1.2-1.2h11"/><path d="M15.4 7.8v4.7a1.2 1.2 0 0 1-1.2 1.2H4"/><path d="M13.2 .9l2.9 2.2-2.9 2.3z" fill="#3350e0" stroke-width="1"/><path d="M4 11.5L1.1 13.7 4 16z" fill="#3350e0" stroke-width="1"/></svg>
<svg style="left:2718px;top:930.8px" width="21" height="17" viewBox="0 0 21 17" fill="none" stroke="#3350e0" stroke-width="1.8" stroke-linecap="round"><path d="M6.4 1.5h13M6.4 8.5h13M6.4 15.5h13"/><path d="M1.7 1.5h.6M1.7 8.5h.6M1.7 15.5h.6" stroke-width="2.2"/></svg>
<svg style="left:2753px;top:930.8px" width="17" height="17" viewBox="0 0 17 17" fill="none" stroke="#3350e0" stroke-width="1.8" stroke-linejoin="round" stroke-linecap="round"><path d="M1.3 9V4.3a1.2 1.2 0 0 1 1.2-1.2h11"/><path d="M15.4 7.8v4.7a1.2 1.2 0 0 1-1.2 1.2H4"/><path d="M13.2 .9l2.9 2.2-2.9 2.3z" fill="#3350e0" stroke-width="1"/><path d="M4 11.5L1.1 13.7 4 16z" fill="#3350e0" stroke-width="1"/></svg>
<svg style="left:2718px;top:994.8px" width="21" height="17" viewBox="0 0 21 17" fill="none" stroke="#3350e0" stroke-width="1.8" stroke-linecap="round"><path d="M6.4 1.5h13M6.4 8.5h13M6.4 15.5h13"/><path d="M1.7 1.5h.6M1.7 8.5h.6M1.7 15.5h.6" stroke-width="2.2"/></svg>
<svg style="left:2753px;top:994.8px" width="17" height="17" viewBox="0 0 17 17" fill="none" stroke="#3350e0" stroke-width="1.8" stroke-linejoin="round" stroke-linecap="round"><path d="M1.3 9V4.3a1.2 1.2 0 0 1 1.2-1.2h11"/><path d="M15.4 7.8v4.7a1.2 1.2 0 0 1-1.2 1.2H4"/><path d="M13.2 .9l2.9 2.2-2.9 2.3z" fill="#3350e0" stroke-width="1"/><path d="M4 11.5L1.1 13.7 4 16z" fill="#3350e0" stroke-width="1"/></svg>
<div class="abs" style="left:2830px;top:459.5px;width:12px;height:600px;background:#f7f7f8"></div>
<div class="abs" style="left:2830px;top:460px;width:12px;height:330px;background:linear-gradient(90deg,#c3cee6,#d3dbee 50%,#c3cee6);border-radius:6px"></div>
</div>
</body></html>
